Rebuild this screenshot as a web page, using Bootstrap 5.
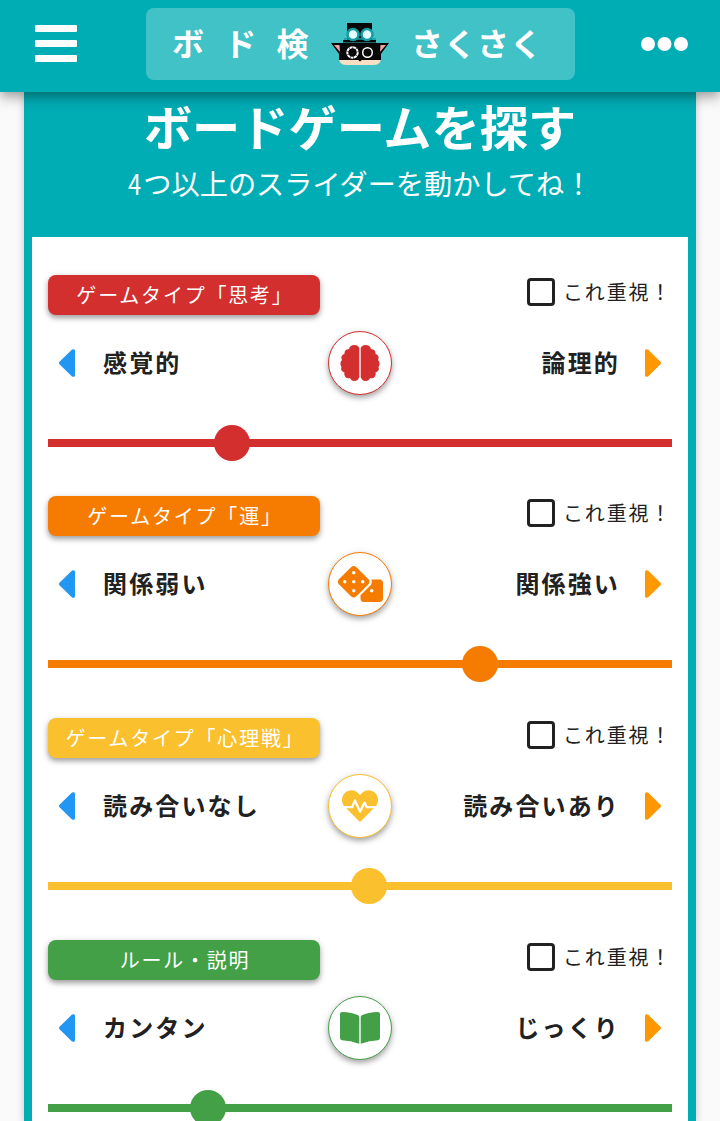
<!DOCTYPE html>
<html lang="ja">
<head>
<meta charset="utf-8">
<meta name="viewport" content="width=device-width, initial-scale=1">
<title>ボド検さくさく</title>
<link href="https://cdn.jsdelivr.net/npm/bootstrap@5.3.0/dist/css/bootstrap.min.css" rel="stylesheet">
<style>
  html { overflow: hidden; }
  body { height: 1121px; overflow: hidden; background: #fafafa; color: #212121; font-family: "Noto Sans CJK JP", sans-serif; }
  .app-bar { height: 92px; background: #00adb5; z-index: 10; box-shadow: 0 4px 8px -2px rgba(0,0,0,.2), 0 8px 10px rgba(0,0,0,.14), 0 2px 20px rgba(0,0,0,.12); }
  .bar-btn { width: 146px; height: 92px; }
  .bar-btn.end { width: 145px; }
  .brand-btn { width: 429px; height: 72px; margin-top: 8px; border-radius: 8px; background: #40c2c7; font-size: 32px; font-weight: 700; line-height: 68px; }
  .brand-a { letter-spacing: 20.3px; margin-left: 26px; width: 159px; }
  .brand-b { letter-spacing: 1px; margin-left: 22px; }
  .brand-logo { margin-top: 14px; }
  .main-card { margin: 0 24px; padding: 0 8px; height: 1029px; background: #00adb5; box-shadow: 0 2px 8px rgba(0,0,0,.22); }
  .main-head { height: 145px; }
  .main-head h1 { font-size: 48.2px; line-height: 66px; height: 71px; margin: 0; font-weight: 700; }
  .main-head p { font-size: 28.2px; line-height: 40px; margin: 0; }
  .narrow { display: inline-block; transform: scaleX(.84); transform-origin: left; }
  .panel { padding: 38px 16px 0; height: 884px; }
  .factor { height: 222px; }
  .factor:first-child { height: 221px; }
  .factor-name { width: 272px; height: 40px; padding-left: 2px; border-radius: 8px; background: var(--tone); font-size: 20px; letter-spacing: 1.786px; line-height: 40px; box-shadow: 0 3px 5px rgba(0,0,0,.3), 0 2px 10px rgba(0,0,0,.12); }
  .weight { height: 35px; font-size: 20px; letter-spacing: 1.786px; line-height: 34px; }
  .tick { width: 28px; height: 28px; border: 3px solid #212121; border-radius: 4px; margin: 3px 8px 0 0; }
  .ends { height: 64px; margin-top: 16px; font-size: 24px; font-weight: 700; letter-spacing: 2.143px; }
  .end-a { margin: -2px 0 0 17px; }
  .end-b { margin: -2px 14px 0 0; }
  .round { width: 64px; height: 64px; border: 1.5px solid var(--tone); color: var(--tone); box-shadow: 0 3px 5px rgba(0,0,0,.27), 0 2px 10px rgba(0,0,0,.12); }
  .track { height: 8px; margin-top: 44px; background: var(--tone); position: relative; }
  .thumb { position: absolute; width: 36px; height: 36px; top: -14px; margin-left: -18px; border-radius: 50%; background: var(--tone); }
  svg { display: block; }
  .arr { margin: 0 10px; flex: none; }
</style>
</head>
<body>
<svg width="0" height="0" class="position-absolute" aria-hidden="true">
  <symbol id="left" viewBox="0 0 18 28"><path d="M1.500 12.800 14 .6Q17 -.8 17 2V26Q17 28.800 14 27.400L1.500 15.200Q.5 14 1.500 12.800Z" fill="#2196f3"/></symbol>
  <symbol id="right" viewBox="0 0 18 28"><path d="M16.500 12.800 4 .6Q1 -.8 1 2V26Q1 28.800 4 27.400L16.500 15.200Q17.500 14 16.500 12.800Z" fill="#ff9800"/></symbol>
</svg>

<nav class="app-bar position-relative d-flex">
  <div class="bar-btn">
    <svg width="146" height="92" fill="#fff"><rect x="35" y="25" width="42" height="7" rx="1"/><rect x="35" y="40" width="42" height="7" rx="1"/><rect x="35" y="55" width="42" height="7" rx="1"/></svg>
  </div>
  <div class="brand-btn d-flex text-white text-nowrap">
    <span class="brand-a">ボド検</span>
    <svg class="brand-logo" width="58" height="44" viewBox="0 0 58 44">
      <path d="M16 1H41V18H45V20.500H12V18H16Z" fill="#080808"/>
      <path d="M13 17H45" stroke="#159da3" stroke-width="1.500"/>
      <circle cx="22" cy="12.500" r="5.500" fill="#e4ffff" stroke="#159da3" stroke-width="2.500"/>
      <circle cx="36" cy="12.500" r="5.500" fill="#e4ffff" stroke="#159da3" stroke-width="2.500"/>
      <path d="M8 36H50Q50 43 43 43H15Q8 43 8 36Z" fill="#f9dfc3"/>
      <path d="M0 21H58L50 32V38H8V32Z" fill="#080808"/>
      <path d="M3 23H8.500L9 30ZM55 23H49.500L49 30Z" fill="#efa7a4"/>
      <circle cx="21.500" cy="30.500" r="5.200" fill="none" stroke="#fff" stroke-width="2" stroke-dasharray="3 .5"/>
      <circle cx="36.500" cy="30.500" r="4.800" fill="none" stroke="#fff" stroke-width="1.500"/>
      <path d="M26 37H32L29 39.500Z" fill="#080808"/>
    </svg>
    <span class="brand-b">さくさく</span>
  </div>
  <div class="bar-btn end">
    <svg width="145" height="92" fill="#fff"><circle cx="73" cy="44" r="7"/><circle cx="89.500" cy="44" r="7"/><circle cx="106" cy="44" r="7"/></svg>
  </div>
</nav>

<main class="main-card">
  <header class="main-head text-white text-center text-nowrap">
    <h1>ボードゲームを探す</h1>
    <p><span class="narrow">4</span>つ以上のスライダーを動かしてね！</p>
  </header>
  <div class="panel bg-white">

    <section class="factor" style="--tone:#d32f2f">
      <div class="d-flex justify-content-between">
        <div class="factor-name text-white text-center">ゲームタイプ「思考」</div>
        <label class="weight d-flex"><span class="tick"></span>これ重視！</label>
      </div>
      <div class="ends d-flex align-items-center">
        <div class="d-flex align-items-center flex-fill w-50"><svg class="arr" width="18" height="28"><use href="#left"/></svg><span class="end-a">感覚的</span></div>
        <div class="round rounded-circle bg-white flex-shrink-0 d-flex align-items-center justify-content-center">
          <svg width="40" height="36" viewBox="0 0 40 36" fill="currentColor"><path d="M19.300 3V32Q18 36 14.500 36 11 36 10 33 5.500 34 4.500 30 4 29 4.500 27.500 0 26 1.500 22 -1 18 2 15 0 10.500 4.500 9 4 4.500 9 4 10 0 14.500 0 18 0 19.300 3Z"/><path d="M20.700 3V32Q22 36 25.500 36 29 36 30 33 34.500 34 35.500 30 36 29 35.500 27.500 40 26 38.500 22 41 18 38 15 40 10.500 35.500 9 36 4.500 31 4 30 0 25.500 0 22 0 20.700 3Z"/></svg>
        </div>
        <div class="d-flex align-items-center justify-content-end flex-fill w-50"><span class="end-b">論理的</span><svg class="arr" width="18" height="28"><use href="#right"/></svg></div>
      </div>
      <div class="track"><span class="thumb" style="left:184px"></span></div>
    </section>

    <section class="factor" style="--tone:#f57c00">
      <div class="d-flex justify-content-between">
        <div class="factor-name text-white text-center">ゲームタイプ「運」</div>
        <label class="weight d-flex"><span class="tick"></span>これ重視！</label>
      </div>
      <div class="ends d-flex align-items-center">
        <div class="d-flex align-items-center flex-fill w-50"><svg class="arr" width="18" height="28"><use href="#left"/></svg><span class="end-a">関係弱い</span></div>
        <div class="round rounded-circle bg-white flex-shrink-0 d-flex align-items-center justify-content-center">
          <svg width="45" height="36" viewBox="0 0 640 512" fill="currentColor"><path d="M592 192H473.260c12.690 29.590 7.120 65.200-17 89.320L320 417.580V464c0 26.510 21.490 48 48 48h224c26.510 0 48-21.490 48-48V240c0-26.510-21.490-48-48-48zM480 376c-13.250 0-24-10.750-24-24s10.750-24 24-24 24 10.750 24 24-10.750 24-24 24zM433.630 189.940 258.060 14.370c-19.160-19.160-50.220-19.160-69.380 0L13.110 189.940c-19.160 19.160-19.160 50.220 0 69.380L188.680 434.890c19.160 19.160 50.220 19.160 69.380 0l175.570-175.570c19.160-19.160 19.160-50.220 0-69.380zM96 248c-13.250 0-24-10.750-24-24s10.750-24 24-24 24 10.750 24 24-10.750 24-24 24zm128 128c-13.250 0-24-10.750-24-24s10.750-24 24-24 24 10.750 24 24-10.750 24-24 24zm0-128c-13.250 0-24-10.750-24-24s10.750-24 24-24 24 10.750 24 24-10.750 24-24 24zm0-128c-13.250 0-24-10.750-24-24s10.750-24 24-24 24 10.750 24 24-10.750 24-24 24zm128 128c-13.250 0-24-10.750-24-24s10.750-24 24-24 24 10.750 24 24-10.750 24-24 24z"/></svg>
        </div>
        <div class="d-flex align-items-center justify-content-end flex-fill w-50"><span class="end-b">関係強い</span><svg class="arr" width="18" height="28"><use href="#right"/></svg></div>
      </div>
      <div class="track"><span class="thumb" style="left:432px"></span></div>
    </section>

    <section class="factor" style="--tone:#fbc02d">
      <div class="d-flex justify-content-between">
        <div class="factor-name text-white text-center">ゲームタイプ「心理戦」</div>
        <label class="weight d-flex"><span class="tick"></span>これ重視！</label>
      </div>
      <div class="ends d-flex align-items-center">
        <div class="d-flex align-items-center flex-fill w-50"><svg class="arr" width="18" height="28"><use href="#left"/></svg><span class="end-a">読み合いなし</span></div>
        <div class="round rounded-circle bg-white flex-shrink-0 d-flex align-items-center justify-content-center">
          <svg width="36" height="36" viewBox="0 0 512 512" fill="currentColor"><path d="M320.200 243.800l-49.700 99.400c-6 12.100-23.400 11.700-28.900-.6l-56.900-126.300-30 71.700H60.600l182.500 186.500c7.100 7.300 18.600 7.300 25.700 0L451.400 288H342.300l-22.100-44.200zM473.700 73.900l-2.400-2.500c-51.500-52.600-135.800-52.600-187.400 0L256 100l-27.900-28.500c-51.500-52.700-135.900-52.700-187.400 0l-2.400 2.400C-10.400 123.700-12.500 203 31 256h102.400l35.900-86.200c5.400-12.900 23.600-13.100 29.200-.4l58.200 129.300 49-97.900c5.900-11.800 22.700-11.800 28.600 0l27.600 55.200H481c43.500-53 41.400-132.300-7.300-182.100z"/></svg>
        </div>
        <div class="d-flex align-items-center justify-content-end flex-fill w-50"><span class="end-b">読み合いあり</span><svg class="arr" width="18" height="28"><use href="#right"/></svg></div>
      </div>
      <div class="track"><span class="thumb" style="left:321px"></span></div>
    </section>

    <section class="factor" style="--tone:#43a047">
      <div class="d-flex justify-content-between">
        <div class="factor-name text-white text-center">ルール・説明</div>
        <label class="weight d-flex"><span class="tick"></span>これ重視！</label>
      </div>
      <div class="ends d-flex align-items-center">
        <div class="d-flex align-items-center flex-fill w-50"><svg class="arr" width="18" height="28"><use href="#left"/></svg><span class="end-a">カンタン</span></div>
        <div class="round rounded-circle bg-white flex-shrink-0 d-flex align-items-center justify-content-center">
          <svg width="40" height="32" viewBox="0 0 40 32" fill="currentColor"><path d="M2 0Q12 .3 18.500 3.500 19.300 4 19.300 5V31Q19.300 32 18.200 31.500 11 28.500 2 28.200 0 28 0 26V2Q0 0 2 0Z" transform="matrix(1 0 0 1 0 0)"/><path d="M38 0Q28 .3 21.500 3.500 20.700 4 20.700 5V31Q20.700 32 21.800 31.500 29 28.500 38 28.200 40 28 40 26V2Q40 0 38 0Z"/></svg>
        </div>
        <div class="d-flex align-items-center justify-content-end flex-fill w-50"><span class="end-b">じっくり</span><svg class="arr" width="18" height="28"><use href="#right"/></svg></div>
      </div>
      <div class="track"><span class="thumb" style="left:160px"></span></div>
    </section>

  </div>
</main>
<script src="https://cdn.jsdelivr.net/npm/bootstrap@5.3.0/dist/js/bootstrap.bundle.min.js"></script>
</body>
</html>
